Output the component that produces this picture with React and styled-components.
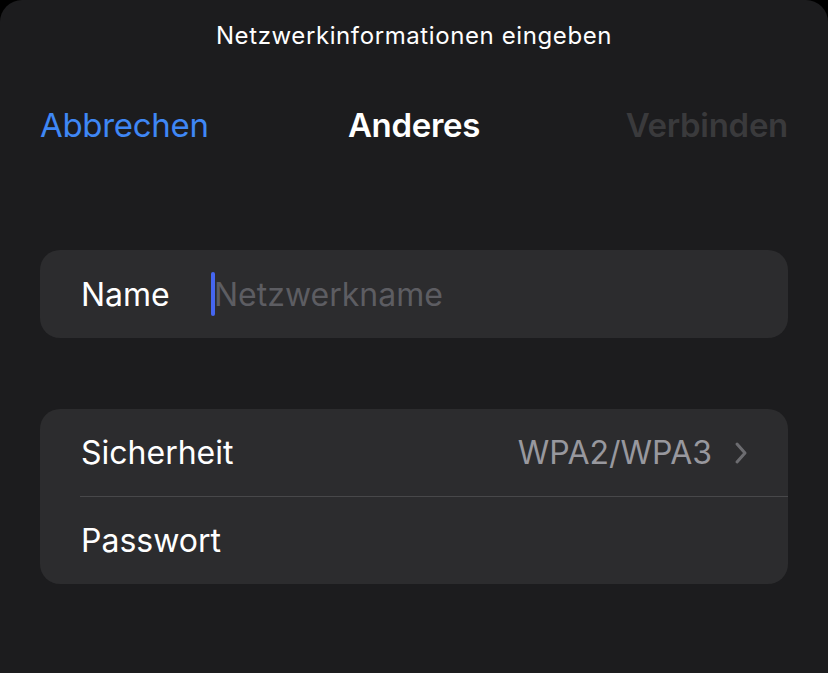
import React from "react";
import styled, { createGlobalStyle } from "styled-components";

const Global = createGlobalStyle`
  html, body {
    margin: 0;
    padding: 0;
    background: #000;
  }
  body {
    font-family: Inter, "Noto Sans", "Liberation Sans", sans-serif;
    -webkit-font-smoothing: antialiased;
  }
`;

const Sheet = styled.div`
  width: 828px;
  height: 673px;
  background: #1c1c1e;
  border-radius: 22px 22px 0 0;
  box-sizing: border-box;
  padding: 0 40px;
  display: flex;
  flex-direction: column;
  overflow: hidden;
`;

const Prompt = styled.div`
  color: #fff;
  font-size: 24px;
  text-align: center;
  margin-top: 21px;
  height: 30px;
  line-height: 30px;
  letter-spacing: 0.6px;
`;

const NavBar = styled.div`
  display: grid;
  grid-template-columns: 1fr auto 1fr;
  align-items: center;
  margin-top: 44px;
  height: 60px;
`;

const NavButton = styled.div`
  font-size: 33px;
  color: ${(p) => p.color};
  font-weight: ${(p) => (p.bold ? 600 : 400)};
  justify-self: ${(p) => p.align};
  letter-spacing: -0.3px;
`;

const Group = styled.div`
  background: #2c2c2e;
  border-radius: 20px;
  margin-top: ${(p) => p.top}px;
  overflow: hidden;
`;

const Row = styled.div`
  height: ${(p) => p.h || 87}px;
  display: flex;
  align-items: center;
  padding: 0 40px 0 41px;
  font-size: 32px;
  color: #fff;
  & + & {
    border-top: 1px solid #48484a;
    margin-left: 40px;
    padding-left: 1px;
  }
`;

const Label = styled.span`
  width: 130px;
  flex-shrink: 0;
`;

const Field = styled.div`
  display: flex;
  align-items: center;
  color: #5d5d62;
`;

const Caret = styled.span`
  width: 4px;
  height: 44px;
  border-radius: 2px;
  background: #4566f0;
  margin-right: -1px;
`;

const Value = styled.span`
  margin-left: auto;
  color: #98989e;
  display: flex;
  align-items: center;
  gap: 22px;
`;

export default function App() {
  return (
    <>
      <Global />
      <Sheet>
        <Prompt>Netzwerkinformationen eingeben</Prompt>
        <NavBar>
          <NavButton color="#3f87f5" align="start">
            Abbrechen
          </NavButton>
          <NavButton color="#fff" bold align="center">
            Anderes
          </NavButton>
          <NavButton color="#3a3a3c" bold align="end">
            Verbinden
          </NavButton>
        </NavBar>
        <Group top={95}>
          <Row h={88}>
            <Label>Name</Label>
            <Field>
              <Caret />
              Netzwerkname
            </Field>
          </Row>
        </Group>
        <Group top={71}>
          <Row>
            <Label>Sicherheit</Label>
            <Value>
              WPA2/WPA3
              <svg width="14" height="24" viewBox="0 0 14 24">
                <path
                  d="M3 3 L11 12 L3 21"
                  fill="none"
                  stroke="#6c6c70"
                  strokeWidth="3"
                  strokeLinecap="round"
                  strokeLinejoin="round"
                />
              </svg>
            </Value>
          </Row>
          <Row>
            <Label>Passwort</Label>
          </Row>
        </Group>
      </Sheet>
    </>
  );
}
